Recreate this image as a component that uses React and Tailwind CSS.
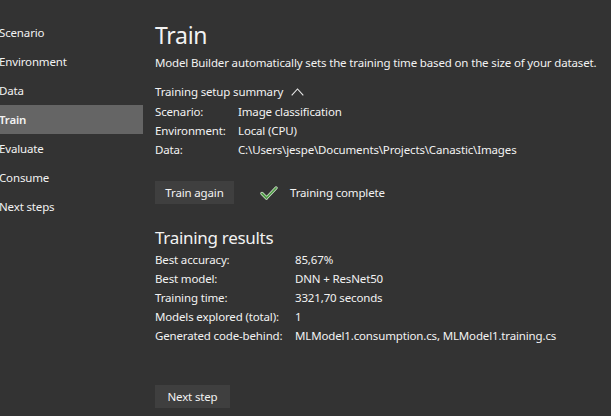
import React from "react";

const nav = ["Scenario", "Environment", "Data", "Train", "Evaluate", "Consume", "Next steps"];

function Check() {
  return (
    <svg width="18" height="14" viewBox="0 0 18 14" className="block">
      <path d="M2 7.5 L6.5 12 L16 2" fill="none" stroke="#d9e8d5" strokeWidth="3.2" strokeLinecap="round" strokeLinejoin="round" />
      <path d="M2 7.5 L6.5 12 L16 2" fill="none" stroke="#4e9a45" strokeWidth="1.8" strokeLinecap="round" strokeLinejoin="round" />
    </svg>
  );
}

function Chevron() {
  return (
    <svg width="13" height="8" viewBox="0 0 13 8" className="block">
      <path d="M0.7 7.3 L6.5 1 L12.3 7.3" fill="none" stroke="#e8e8e8" strokeWidth="1.1" />
    </svg>
  );
}

export default function App() {
  const summary = [
    ["Scenario:", "Image classification"],
    ["Environment:", "Local (CPU)"],
    ["Data:", "C:\\Users\\jespe\\Documents\\Projects\\Canastic\\Images"],
  ];
  const results = [
    ["Best accuracy:", "85,67%"],
    ["Best model:", "DNN + ResNet50"],
    ["Training time:", "3321,70 seconds"],
    ["Models explored (total):", "1"],
    ["Generated code-behind:", "MLModel1.consumption.cs, MLModel1.training.cs"],
  ];
  return (
    <div
      className="w-[611px] h-[416px] bg-[#333333] text-[#f2f2f2] flex overflow-hidden text-[11.5px] tracking-[-0.15px]"
      style={{ fontFamily: '"Noto Sans", "Open Sans", sans-serif' }}
    >
      <div className="w-[143px] shrink-0 pt-[18px]">
        {nav.map((n) => (
          <div
            key={n}
            className={`h-[29px] flex items-center -ml-px ${n === "Train" ? "bg-[#656565] font-semibold" : ""}`}
          >
            {n}
          </div>
        ))}
      </div>
      <div className="flex-1 pl-[12px] pt-[19px]">
        <div className="text-[23px] leading-[32px] tracking-[-0.3px]">Train</div>
        <div className="leading-[19px] mt-[2px] whitespace-nowrap">
          Model Builder automatically sets the training time based on the size of your dataset.
        </div>
        <div className="flex items-center gap-[8px] leading-[19px] mt-[10px]">
          <span>Training setup summary</span>
          <Chevron />
        </div>
        <div className="mt-[1px]">
          {summary.map(([k, v]) => (
            <div key={k} className="flex leading-[19px]">
              <span className="w-[83px] shrink-0">{k}</span>
              <span>{v}</span>
            </div>
          ))}
        </div>
        <div className="flex items-center mt-[22px]">
          <button className="h-[23px] w-[79px] bg-[#3f3f3f] text-[#f2f2f2]">Train again</button>
          <span className="ml-[26px]">
            <Check />
          </span>
          <span className="ml-[12px]">Training complete</span>
        </div>
        <div className="text-[17px] leading-[24px] mt-[22px] tracking-[-0.3px]">Training results</div>
        <div>
          {results.map(([k, v]) => (
            <div key={k} className="flex leading-[19px]">
              <span className="w-[140px] shrink-0">{k}</span>
              <span>{v}</span>
            </div>
          ))}
        </div>
        <button className="h-[23px] w-[75px] bg-[#3f3f3f] text-[#f2f2f2] mt-[40px]">Next step</button>
      </div>
    </div>
  );
}
